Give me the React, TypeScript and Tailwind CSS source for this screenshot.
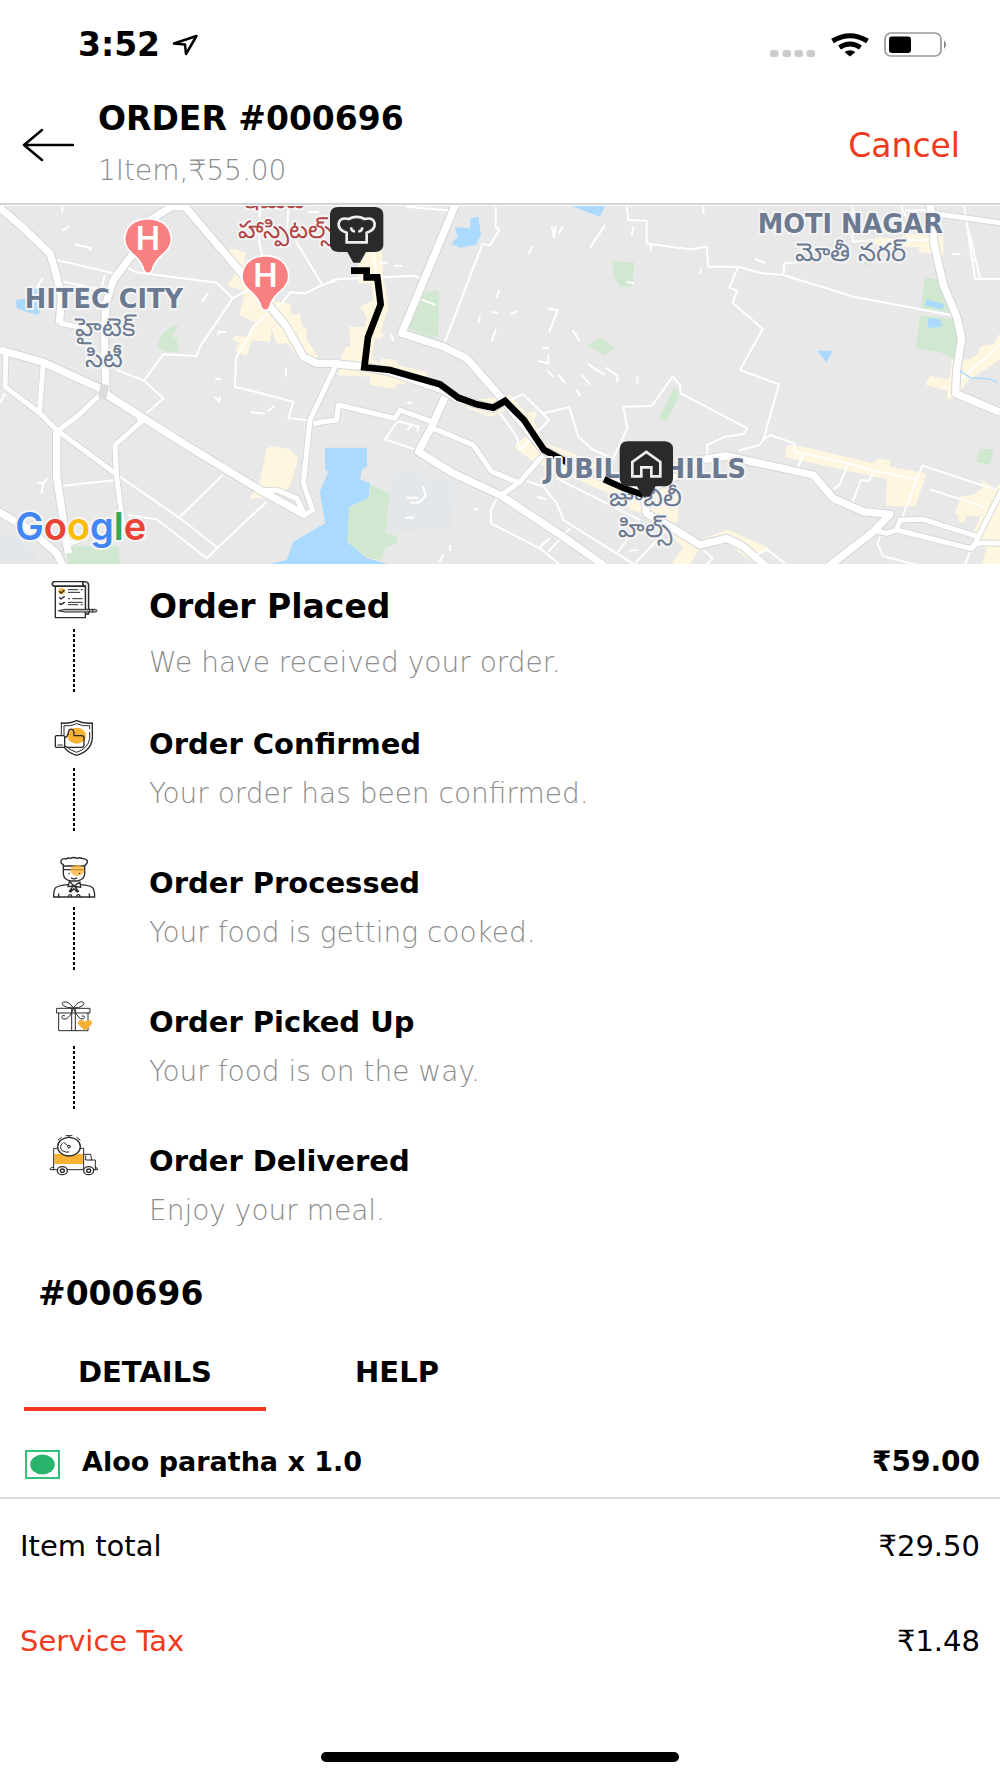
import { useState } from "react";
import type { ReactNode } from "react";

const steps = [
  { title: "Order Placed", text: "We have received your order.", icon: <PlacedIcon /> },
  { title: "Order Confirmed", text: "Your order has been confirmed.", icon: <ConfirmedIcon /> },
  { title: "Order Processed", text: "Your food is getting cooked.", icon: <ChefIcon /> },
  { title: "Order Picked Up", text: "Your food is on the way.", icon: <GiftIcon /> },
  { title: "Order Delivered", text: "Enjoy your meal.", icon: <TruckIcon /> },
];

const tabs = ["DETAILS", "HELP"];

function StepIcon({ viewBox, children }: { viewBox: string; children: ReactNode }) {
  return (
    <svg viewBox={viewBox} className="h-11 w-12 overflow-visible" fill="none" stroke="#2b2b2b" strokeWidth="4" strokeLinejoin="round" strokeLinecap="round" aria-hidden="true">
      {children}
    </svg>
  );
}

function PlacedIcon() {
  return (
    <StepIcon viewBox="60 21 144 132">
      <path d="M166 48 V132 H176 V46 Q176 36 166 35 H74 Q67 36 67 42 Q67 48 74 48 H164 Q157 46 157 40 Q158 35 166 35" fill="#d9d9d9" />
      <path d="M76 49 H166 V143 H76 Z" fill="#fff" />
      <path d="M74 35 H160 Q155 42 162 48 H74 Q67 48 67 42 Q67 36 74 35 Z" fill="#fff" />
      <ellipse cx="95" cy="64" rx="10" ry="9" fill="#f9b233" stroke="none" />
      <path d="M89 65 l4 4 l10 -8 M89 83 l4 4 l10 -7 M89 100 l4 4 l10 -7" strokeWidth="4" />
      <path d="M114 59 H145 M152 59 H158 M114 67 H150 M114 86 H120 M127 86 H158 M114 97 H158 M114 104 H145 M152 104 H158" strokeWidth="3" strokeLinecap="butt" />
      <path d="M86 122 L105 118 H196 Q201 119 201 122 Q201 126 196 126 H105 Z" fill="#bbb" strokeWidth="3" />
      <path d="M178 118 V126 M188 118 V126" strokeWidth="3" />
    </StepIcon>
  );
}

function ConfirmedIcon() {
  return (
    <StepIcon viewBox="60 438 144 132">
      <path d="M94 459 Q120 462 140 452 Q160 462 187 459 V505 Q183 543 140 556 Q108 546 99 524" />
      <path d="M102 494 V467 Q122 470 140 461 Q160 470 179 467 V476 M179 487 V505 Q175 535 140 547 Q122 541 112 532 M94 459 V494" strokeWidth="3" />
      <ellipse cx="140" cy="497" rx="28" ry="24" fill="#f9b233" stroke="none" />
      <path d="M104 503 Q115 500 116 483 Q118 476 126 478 Q133 480 132 497 H156 Q163 498 162 506 V525 Q161 532 154 532 H112 L104 528" />
      <path d="M79 497 H100 Q104 497 104 501 V528 Q104 532 100 532 H79 Q76 532 76 528 V501 Q76 497 79 497 Z" fill="#fff" />
      <path d="M84 525 H97" strokeWidth="3" />
    </StepIcon>
  );
}

function ChefIcon() {
  return (
    <StepIcon viewBox="60 75 144 132">
      <path d="M100 108 V104 Q90 99 94 91 Q98 84 109 87 Q114 82 122 85 Q131 80 141 85 Q150 81 157 86 Q169 85 172 93 Q173 101 165 105 V108 Z" />
      <path d="M100 108 V132 Q101 149 122 153 H142 Q162 149 164 132 V108 M100 119 H164 M124 144 Q132 149 140 144" />
      <ellipse cx="142" cy="121" rx="21" ry="17" fill="#f9b233" fillOpacity="0.75" stroke="none" />
      <path d="M117 130 h1 M148 130 h1" />
      <path d="M118 154 L132 168 L150 156 M132 168 L114 170 L118 156 M132 168 L152 172 L150 156 M128 170 L118 184 M134 170 L146 184 M126 172 L122 186 L132 176 L142 186 L138 170" />
      <path d="M114 164 Q82 167 76 174 Q71 182 71 201 H194 Q194 182 188 173 Q180 166 152 164" />
      <path d="M86 192 V201 M178 192 V201 M115 200 Q116 194 120 194 Q125 194 125 200 M140 200 Q140 194 145 194 Q150 194 150 200" />
    </StepIcon>
  );
}

function GiftIcon() {
  return (
    <StepIcon viewBox="60 492 144 132">
      <path d="M86 549 V602 H174 V549 M81 535 H180 V549 H81 Z M125 535 V602 M136 535 V602" strokeWidth="3" />
      <path d="M130 534 Q116 512 100 516 Q93 519 100 527 Q110 534 130 534 Q146 512 158 516 Q166 519 158 527 Q148 534 130 534 Q124 558 108 567 Q97 570 95 561 Q96 554 104 557 M130 534 Q138 556 152 567 Q163 568 164 562 Q162 555 156 558" strokeWidth="3" />
      <path d="M165 602 L147 586 Q140 577 149 571 Q158 567 165 576 Q172 567 181 571 Q190 577 183 586 Z" fill="#f9b233" stroke="none" />
    </StepIcon>
  );
}

function TruckIcon() {
  return (
    <StepIcon viewBox="60 909 144 132">
      <path d="M73 972 H160 V1002 H73 Z" fill="#f9b233" stroke="none" />
      <path d="M82 955 H71 V1019 H80 M150 955 H161 V1019 H110 M161 973 H182 L185 990 M167 978 V990 H196 V1019 H190 M71 1012 Q59 1012 60 1019 H71 M196 1012 Q204 1013 203 1019 H196" strokeWidth="3" />
      <ellipse cx="117" cy="950" rx="34" ry="28" fill="#fff" />
      <path d="M108 917 H126 M117 917 V922 M84 930 L94 922 M150 930 L140 922 M101 937 L116 950 M97 940 Q86 950 97 962 Q108 969 117 966" strokeWidth="3" />
      <circle cx="117" cy="950" r="4" fill="#fff" strokeWidth="3" />
      <ellipse cx="97" cy="1022" rx="15" ry="12" fill="#fff" />
      <ellipse cx="97" cy="1022" rx="6" ry="5" />
      <ellipse cx="176" cy="1022" rx="15" ry="12" fill="#fff" />
      <ellipse cx="176" cy="1022" rx="6" ry="5" />
    </StepIcon>
  );
}

// streets are grouped by map tile and by weight
const roads = [
  {
    x: 0,
    wide: "M545 8 L640 120 L730 225 L810 320 L860 380 L910 470 L950 490 L1020 490 M560 20 L515 20 L450 60 L400 160 L340 240 L318 310 L313 400 L318 570 M0 450 L130 487 L300 565 L330 590 L550 730 L780 870 L915 945 M-10 15 L60 75 L150 160 L165 210 L185 290 L178 370 M-10 932 L90 990 L170 1060 L190 1100 M170 695 L170 830 L205 1060",
    medium: "M178 370 L300 392 M1010 490 L930 660 L910 850 L938 930 L915 945 L890 895 L830 870 L780 872 M18 455 L15 560 L120 640 L170 690 L345 820 M130 490 L118 635 M300 585 L230 650 L170 695 M435 655 L345 735 L350 830 L372 1000 M190 1035 L240 1020 M412 655 h25",
    thin: "M345 820 L540 955 L655 1045 M170 180 L340 220 M190 245 L300 268 M385 205 L410 217 L650 248 L698 295 L600 440 L590 468 L490 463 L432 542 M350 510 L432 542 L490 595 L440 640 M698 295 L760 260 M1010 240 L967 255 L915 280 L870 277 L850 305 L800 345 L762 378 L708 475 L705 560 L880 605 L865 655 L925 660 M190 857 L350 840 M668 825 L540 950 M800 905 L620 1075 L470 958 L385 945 M780 20 L778 130 L790 180 M865 20 L862 80 L967 255 M315 225 L300 280 M187 20 v15 M187 92 L208 78 M225 133 L272 145 L270 152 M607 305 L625 278 M655 405 V395 L680 397 M858 505 v25 M645 537 h18 M645 590 l12 15 l3 -15 M752 636 L795 641 M803 634 L824 617 M112 848 L130 850 L142 836 M130 850 L124 880 M110 265 L128 235 M0 610 L15 580 M925 36 h32",
  },
  {
    x: 990,
    wide: "M380 5 L215 400 L340 440 L410 475 L520 600 L640 750 L720 790 L830 835 L940 880 L950 940 L1030 985 L1110 1035 L1190 1015 L1240 1040 L1310 1100 M0 490 L100 500 L180 515 L340 570 L390 600 L490 625 L530 600 M345 590 L305 680 L265 755 L370 820 L510 885 L700 1010 L820 1095",
    medium: "M-50 672 L-20 665 L20 660 L25 615 L195 655 L210 630 L305 665 M310 685 L430 735 L485 815 L560 845 M640 765 L570 845 L515 885",
    thin: "M497 20 V80 L508 90 L480 135 L457 133 L343 430 M890 20 L895 60 L950 62 V130 L1020 140 L1080 148 L1130 140 L1135 200 L1225 200 L1295 220 L1360 225 L1570 290 L1865 345 M962 130 v25 M0 245 L20 238 L250 227 L270 235 M540 600 L580 583 L657 660 L570 750 L560 710 L510 640 M640 640 L718 622 L745 710 L790 750 L850 775 L892 685 L880 620 L965 618 L1028 530 M205 660 L165 718 L260 750 M200 662 L265 680 L262 695 M232 692 l12 -18 M590 843 L640 860 L680 910 L700 960 L860 1060 L915 1095 M680 835 L930 960 M640 860 l40 -50 M500 895 L483 930 V970 L630 1045 L690 1095 M630 1040 l28 -25 M655 1055 L720 985 M860 1060 L930 970 M915 1090 L1000 1000 M130 160 L140 230 M145 188 h28 M193 197 h25 M183 403 l8 20 M665 77 l7 35 l6 -35 M685 100 l14 -20 M825 75 L780 143 M607 138 l-12 25 M910 80 l-5 25 M890 247 l22 2 M508 270 l-8 22 M450 348 l-6 22 M485 336 l18 3 M542 343 l20 -10 M498 387 l-14 38 M652 325 L683 331 L657 397 M728 390 l20 32 M638 443 l20 2 M625 483 L655 490 V465 M652 512 l20 20 M685 523 l20 27 M755 523 l25 32 M775 493 L825 525 M827 503 L862 527 V548 M922 528 v22 M740 568 l10 20 M275 298 L315 315 M232 608 h15 M228 893 h35 M240 908 h25 l22 -20 l-8 -30 M225 953 h28 M430 928 h15 M620 890 l28 8 M340 1065 l-12 20 M360 1035 v18 M898 1052 l25 -3 M230 20 L365 32",
  },
  {
    x: 1980,
    wide: "M-70 885 L60 825 L120 780 L200 768 L460 825 L520 895 L610 935 L690 943 L640 995 L505 1100 M810 8 L822 130 L850 255 L890 350 L905 415 L890 510 L887 580 L1020 637",
    medium: "M640 990 L680 1000 L710 990 L930 1045 L955 1028 L1020 1030 M710 990 L720 960 L790 958 L960 1012 M1025 870 L935 1050 M815 40 L1020 68",
    thin: "M38 530 L60 555 L62 580 L262 685 L250 702 L190 712 L142 735 V770 M235 200 L208 262 L232 273 L218 308 L308 387 L240 510 L357 553 L310 720 L330 705 L403 730 V755 L430 760 L565 790 L640 812 L770 838 M310 720 L298 735 L235 752 M370 225 L373 190 L420 187 M430 760 L415 803 M565 790 L538 855 L520 868 M640 812 L628 842 L603 840 L577 908 M1010 870 L787 797 L727 950 M810 868 L980 923 M913 20 L945 237 H1020 M920 70 L935 128 L960 235 M925 125 h12 M940 180 h12 M877 162 h25 M723 20 L740 55 M735 32 L800 30 M578 20 V125 M578 125 L640 120 M735 120 H820 M900 540 L1020 435 M130 20 v22 M285 177 l30 12 M122 207 v14 M660 1010 L653 1030 L668 1068 L770 1095 M130 1050 l28 25 l-22 22 M290 1065 L320 1048 L375 1090 M930 1055 L915 1095",
  },
];

function Pin({ x, y }: { x: number; y: number }) {
  return (
    <g transform={`translate(${x} ${y})`}>
      <path d="M0 106 Q-12 106 -16 86 Q-24 66 -48 46 Q-72 26 -70 0 Q-64 -56 0 -58 Q64 -56 70 0 Q72 26 48 46 Q24 66 16 86 Q12 106 0 106 Z" fill="#f98080" stroke="#fff" strokeWidth="5" />
      <text y="35" textAnchor="middle" fontSize="98" fill="#fff" className="font-['Inter',sans-serif] font-semibold">H</text>
    </g>
  );
}

function RouteMap() {
  const label = { fill: "#6b7a90", stroke: "#f4f4f4", strokeWidth: 12, strokeLinejoin: "round", paintOrder: "stroke", textAnchor: "middle" } as const;
  return (
    <svg viewBox="0 18 3000 1074" className="block w-full" role="img" aria-label="Delivery route map">
      <rect y="18" width="3000" height="1074" fill="#e8e8e8" />
      <g fill="#cfe8cf">
        <path d="M535 375 L520 378 Q475 400 474 445 L505 457 H537 L530 440 L535 415 L515 410 Z M205 1092 L200 1060 L215 1040 L355 1038 L360 1092 Z" />
        <g transform="translate(990)">
          <path d="M285 275 L327 273 L325 410 L235 385 Z M235 390 L300 405 L345 430 L240 400 Z M847 184 L913 187 L906 260 H870 L852 230 Z M773 435 L810 413 L857 443 L823 467 Z" />
        </g>
        <g transform="translate(1980)">
          <path d="M-2 655 L20 662 L60 582 L45 562 Z M792 240 L800 232 L835 240 L870 340 L785 325 Z M780 345 L890 358 L897 430 L880 478 L845 458 L767 445 Z M960 747 H1002 L988 796 L948 786 Z M598 150 L610 140 V165 H598 Z M612 185 h20 v9 h-18 Z" />
        </g>
      </g>
      <path d="M1190 800 L1370 850 L1350 990 L1160 1000 L1168 880 Z M0 1000 L80 1020 L120 1092 H0 Z" fill="#e4e7ea" />
      <g fill="#fef6df">
        <path d="M672 150 L710 148 L738 160 L728 205 L790 300 L870 310 L875 345 L900 340 L907 382 L920 385 V418 L955 470 L900 480 L862 430 H830 L815 385 L810 425 L755 420 L740 468 L705 452 L720 430 L697 418 L705 408 L740 410 L765 365 L718 345 L735 275 L682 255 L705 225 Z M800 745 L820 738 L870 748 L895 775 L870 860 L830 890 L748 897 L780 840 Z" />
        <g transform="translate(990)">
          <path d="M85 185 L110 150 H155 L160 230 L175 320 L150 400 H158 V415 H135 L125 478 L150 490 L155 475 L200 480 V495 L293 515 L285 540 L230 535 L228 552 H200 L195 567 L120 555 V530 L25 525 L32 475 L48 440 L62 440 L58 380 L105 380 L110 350 L90 320 L130 300 L125 250 H85 Z" />
          <path d="M375 610 L430 600 L520 590 L540 585 L590 640 L615 632 L622 652 L610 660 L640 730 L720 755 L850 820 L1050 880 L1040 960 L900 930 L880 900 L700 820 L620 790 L555 745 L560 730 L600 700 L530 630 L480 650 Z" />
        </g>
        <g transform="translate(1980)">
          <path d="M380 735 L430 740 L640 790 L655 775 L692 782 L690 800 L800 820 L765 920 L678 918 L680 838 L560 812 L470 792 L375 772 Z M640 130 L650 112 L720 118 L740 100 L850 108 V168 L775 155 L780 140 H660 Z M1020 400 L1000 432 L962 438 L955 460 L930 478 H875 L868 540 L810 527 L797 555 L862 572 V603 L905 570 L925 540 L990 500 L1020 478 Z M960 838 L1005 865 L1020 850 V1092 H965 L980 1045 L940 1000 L960 950 L920 945 L912 968 L895 965 L897 945 L885 943 L903 888 L940 885 L970 860 Z M0 920 L45 930 L55 960 L30 985 L120 1020 L205 988 L250 1010 L330 1045 L300 1062 L290 1092 L240 1060 L200 1025 L120 1045 L90 1092 H35 L70 1040 L0 985 Z" />
        </g>
      </g>
      <path
        d="M975 743 H1101 V800 L1085 810 L1080 838 L1110 850 L1105 895 L1050 920 L1042 1025 L1100 1075 L1165 1092 H805 L860 1080 L880 1025 L975 970 L960 875 L985 815 L975 808 Z M48 300 L85 295 L90 265 L120 268 L130 310 L115 345 L80 335 L50 325 Z M1365 82 L1410 85 L1412 55 L1435 50 L1443 105 L1427 135 L1380 143 L1353 132 L1373 110 Z M1715 18 H1815 L1800 51 Z M2451 452 H2498 L2480 487 Z M2778 298 L2832 313 L2828 328 L2777 318 Z M2785 354 L2820 358 L2825 380 L2782 384 Z"
        fill="#aadaff"
      />
      <path d="M1110 853 L1168 880 L1157 1000 L1192 1008 L1190 1028 L1155 1045 L1143 1080 L1100 1072 L1042 1025 L1047 920 L1108 895 Z" fill="#cfe8cf" />
      <g fill="none" strokeLinejoin="round">
        {roads.map((r) => (
          <g key={r.x} transform={`translate(${r.x})`}>
            <path d={r.thin} stroke="#fff" strokeWidth="6" />
            <path d={r.medium} stroke="#d3d5d9" strokeWidth="20" />
            <path d={r.wide} stroke="#d3d5d9" strokeWidth="28" />
          </g>
        ))}
        {roads.map((r) => (
          <g key={r.x} transform={`translate(${r.x})`} stroke="#fff">
            <path d={r.medium} strokeWidth="15" />
            <path d={r.wide} strokeWidth="22" />
          </g>
        ))}
        <path d="M2880 512 L2910 533 L2970 537 L2992 548" stroke="#aadaff" strokeWidth="4" />
      </g>
      <path d="M302 550 L328 556 L318 600 L294 590 Z" fill="#dcdcdc" />
      <path d="M1053 212 L1100 212 V232 H1132 L1142 313 L1104 412 L1093 502 L1170 510 L1320 553 L1375 593 L1430 613 L1480 623 L1515 603 L1572 660 L1632 750 L1702 787" fill="none" stroke="#000" strokeWidth="20" />
      <path d="M1725 800 L1800 830" stroke="#d5d5d5" strokeWidth="19" />

      <g {...label} className="font-['DejaVu_Sans',sans-serif]">
        <g fontSize="77" className="font-bold">
          <text x="312" y="325">HITEC CITY</text>
          <text x="2551" y="99">MOTI NAGAR</text>
          <text x="1935" y="835">JUBILEE HILLS</text>
        </g>
        <g fontSize="77">
          <text x="316" y="408">హైటెక్</text>
          <text x="312" y="500">సిటీ</text>
          <text x="2552" y="184">మోతీ నగర్</text>
          <text x="1936" y="918">జూబిలీ</text>
          <text x="1936" y="1012">హిల్స్</text>
        </g>
        <g fontSize="74" fill="#b04545">
          <text x="820" y="24">ఇమేజ్</text>
          <text x="858" y="114">హాస్పిటల్స్</text>
        </g>
      </g>
      <path d="M1812 838 L1870 864 L1930 884" fill="none" stroke="#000" strokeWidth="19" />

      <Pin x={444} y={114} />
      <Pin x={796} y={225} />

      <g transform="translate(1070 88)">
        <path d="M-55 -67 H55 Q80 -65 80 -45 V48 Q78 68 55 68 H28 L10 100 H-10 L-28 68 H-55 Q-80 66 -80 45 V-45 Q-78 -67 -55 -67 Z" fill="#2a2a2a" />
        <path d="M-30 39 V10 Q-56 2 -54 -18 Q-50 -37 -24 -31 Q0 -44 24 -31 Q50 -37 54 -18 Q56 2 30 10 V39 Z M-17 -6 Q-15 8 -5 5 M17 -6 Q15 8 5 5" fill="none" stroke="#eee" strokeWidth="8" />
      </g>
      <g transform="translate(1939 792)">
        <path d="M-55 -68 H55 Q80 -66 80 -46 V45 Q78 67 55 67 H28 L10 98 H-10 L-28 67 H-55 Q-80 65 -80 42 V-46 Q-78 -68 -55 -68 Z" fill="#2a2a2a" />
        <path d="M-42 37 V-6 L0 -36 L42 -6 V37 H15 V10 H-15 V37 Z" fill="none" stroke="#eee" strokeWidth="8" />
      </g>

      <text x="46" y="1020" fontSize="114" stroke="#f4f4f4" strokeWidth="12" paintOrder="stroke" strokeLinejoin="round" className="font-['Inter',sans-serif] font-semibold">
        <tspan fill="#4285f4">G</tspan>
        <tspan fill="#ea4335">o</tspan>
        <tspan fill="#fbbc05">o</tspan>
        <tspan fill="#4285f4">g</tspan>
        <tspan fill="#34a853">l</tspan>
        <tspan fill="#ea4335">e</tspan>
      </text>
    </svg>
  );
}

function StatusBar() {
  return (
    <div className="flex h-[90px] items-center justify-between pr-[52px] pl-[78px]">
      <div className="flex items-center gap-3">
        <span className="text-[33px] leading-10 font-bold">3:52</span>
        <svg viewBox="0 0 26 22" className="h-[22px] w-[26px]" fill="none" stroke="#000" strokeWidth="2.500" strokeLinejoin="round" aria-hidden="true">
          <path d="M2 9.500 L24.500 2 L14 20 L13 10.500 Z" />
        </svg>
      </div>
      <div className="flex items-center">
        <svg viewBox="0 0 46 7" className="mt-4 mr-[15px] h-[7px] w-[46px]" fill="#ccc" aria-hidden="true">
          <rect width="8.500" height="7" rx="2.500" />
          <rect x="12.500" width="8.500" height="7" rx="2.500" />
          <rect x="24.500" width="8.500" height="7" rx="2.500" />
          <rect x="36.500" width="8.500" height="7" rx="2.500" />
        </svg>
        <svg viewBox="0 0 38 24" className="mr-[15px] h-6 w-[38px]" fill="none" stroke="#000" strokeWidth="5" aria-hidden="true">
          <path d="M1.500 8 Q19 -2.500 36.500 8 M8.500 14.500 Q19 7.500 29.500 14.500" />
          <path d="M13.500 19 Q19 15.500 24.500 19 L19 23.500 Z" fill="#000" stroke="none" />
        </svg>
        <svg viewBox="0 0 64 26" className="h-[26px] w-16" aria-hidden="true">
          <rect x="1" y="1" width="56" height="23" rx="6" fill="none" stroke="#999" strokeWidth="1.700" />
          <rect x="5" y="4.500" width="22" height="16.500" rx="3" />
          <path d="M60 8.500 Q64 12.500 60 17 Z" fill="#888" />
        </svg>
      </div>
    </div>
  );
}

export default function App() {
  const [tab, setTab] = useState("DETAILS");

  return (
    <div className="flex min-h-screen w-full flex-col bg-white font-['DejaVu_Sans',sans-serif] text-black">
      <StatusBar />

      <header className="flex h-[115px] items-start border-b-2 border-[#d4d4d4] pr-10 pl-[22px]">
        <button type="button" aria-label="Back" className="mt-[38px] mr-6">
          <svg viewBox="0 0 52 34" className="h-[34px] w-[52px]" fill="none" stroke="#000" strokeWidth="2.500" strokeLinecap="round" strokeLinejoin="round">
            <path d="M20 2 L2 17 L20 32 M2 17 H51" />
          </svg>
        </button>
        <div className="flex-1 pt-[9px]">
          <h1 className="text-[33px] leading-10 font-bold">ORDER #000696</h1>
          <p className="mt-3 text-[28px] leading-10 font-light text-[#8c8c8c]">1Item,₹55.00</p>
        </div>
        <button type="button" className="mt-9 text-[33px] leading-10 text-[#f03a22]">Cancel</button>
      </header>

      <div className="pt-px">
        <RouteMap />
      </div>

      <ol className="pt-[13px]">
        {steps.map((step, i) => (
          <li key={step.title} className="flex h-[139px]">
            <div className="mr-[51px] ml-[50px] flex w-12 flex-col items-center">
              {step.icon}
              {i < steps.length - 1 && (
                <span className="mt-2 h-16 w-[2px] bg-[repeating-linear-gradient(to_bottom,#000_0_3px,transparent_3px_5px)]" />
              )}
            </div>
            <div className={i === 0 ? "flex flex-col gap-4 pt-[10px]" : "flex flex-col gap-[10px] pt-2"}>
              <h2 className={i === 0 ? "text-[33px] leading-10 font-bold" : "text-[29px] leading-10 font-bold"}>{step.title}</h2>
              <p className="text-[28px] leading-10 font-light text-[#8c8c8c]">{step.text}</p>
            </div>
          </li>
        ))}
      </ol>

      <section>
        <h2 className="mt-[2px] pl-[38px] text-[33px] leading-10 font-bold">#000696</h2>
        <div role="tablist" className="mt-[38px] flex gap-[10px] pl-6">
          {tabs.map((name) => (
            <button
              key={name}
              type="button"
              role="tab"
              aria-selected={tab === name}
              onClick={() => setTab(name)}
              className={`w-[242px] border-b-4 pb-[15px] text-[29px] leading-10 font-bold ${tab === name ? "border-[#f03a22]" : "border-transparent"}`}
            >
              {name}
            </button>
          ))}
        </div>

        <div className="flex h-[88px] items-center border-b-2 border-[#dcdcdc] pt-4 pr-5 pl-[25px]">
          <svg viewBox="0 0 35 29" className="mt-1 mr-[22px] h-[29px] w-[35px]" aria-label="Vegetarian">
            <rect x="1" y="1" width="33" height="27" fill="none" stroke="#35c07a" strokeWidth="2" />
            <ellipse cx="17.500" cy="14.500" rx="12.300" ry="10" fill="#28b46c" />
          </svg>
          <span className="flex-1 text-[27px] leading-10 font-bold">Aloo paratha x 1.0</span>
          <span className="text-[28px] leading-10 font-bold">₹59.00</span>
        </div>

        <dl className="flex flex-col gap-[55px] pt-[27px] pr-5 pl-5 text-[29px] leading-10">
          <div className="flex justify-between">
            <dt>Item total</dt>
            <dd>₹29.50</dd>
          </div>
          <div className="flex justify-between">
            <dt className="text-[#f03a22]">Service Tax</dt>
            <dd>₹1.48</dd>
          </div>
        </dl>
      </section>

      <div className="mx-auto mt-auto mb-4 h-[10px] w-[358px] rounded-full bg-black" />
    </div>
  );
}
